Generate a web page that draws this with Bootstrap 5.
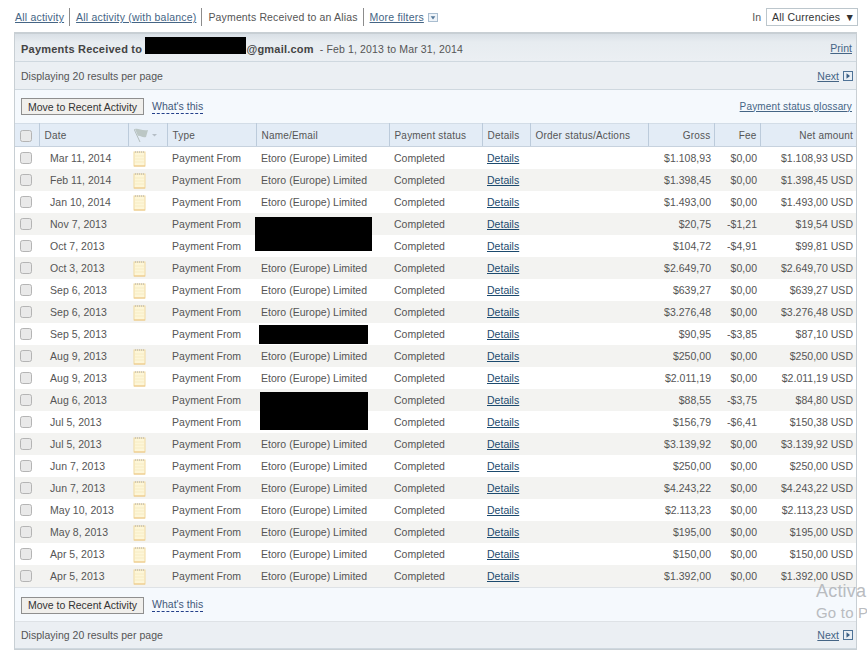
<!DOCTYPE html>
<html lang="en"><head><meta charset="utf-8"><title>Payments Received</title>
<link rel="stylesheet" href="https://cdn.jsdelivr.net/npm/bootstrap@5.3.0/dist/css/bootstrap.min.css">
<style>
html,body{height:653px;overflow:hidden}
body{background:#fff;color:#555;font:10.5px/14px "Liberation Sans",Arial,sans-serif;letter-spacing:.02px;position:relative}
a{color:#456585}
.top-filters{height:32px;padding:2px 9px 0 15px}
.top-filters .sep{border-left:1px solid #8c8c8c;height:18px;margin:0 5px 0 5px}
.top-filters a{letter-spacing:.2px}
.top-filters .sep + a{margin-left:1px}
.top-filters>span.alias-text{letter-spacing:.15px;margin-left:1px}
.filter-arrow{width:10px;height:9px;border:1px solid #a9bdd0;margin-left:4px;background:#eef3f8}
.curr-box{width:92px;height:18px;border:1px solid #bcc6cc;padding:0 2px 0 5px;margin-left:5px;color:#333;font-size:10.500px;letter-spacing:.2px;line-height:16px;white-space:nowrap}
.panel-box{margin:0 10px 0 14px;width:843px;height:618px;border:1px solid #c8cfd4;border-top-width:2px;position:relative}
.bar-title{height:28px;padding:0 4px 0 6px;background:linear-gradient(#d9e0e6,#e7ecf0 30%,#ebeff3);border-bottom:1px solid #cfd8df}
.bar-page{height:28px;padding:0 3px 0 6px;background:#ebeff3;border-bottom:1px solid #cfd8df}
.bar-act{height:33px;padding:0 4px 0 6px;background:#f5f9fd}
.title-strong{font-weight:700;color:#444;font-size:11px;letter-spacing:.22px}
.title-range{letter-spacing:.15px}
.email-gap{display:inline-block;width:101px;height:14px}
.move-btn{font:10.5px/14px "Liberation Sans",Arial,sans-serif;height:17px;padding:0 5px;width:123px;border:1px solid #8f8f8f;border-radius:0;background:#f0efec;color:#333;white-space:nowrap}
.move-btn:hover{background:#f0efec;border-color:#8f8f8f;color:#333}
.whats{color:#42587a;border-bottom:1px dashed #24408a;margin-left:8px;line-height:13px}
.act-glossary{font-size:10px;letter-spacing:.15px}
.pay-table{table-layout:fixed;width:841px;margin:0;border-collapse:collapse;font-size:10.5px;--bs-table-bg:transparent}
.pay-table th,.pay-table td{border:0;padding:0 3px 0 5px;height:22px;line-height:14px;white-space:nowrap;color:#555;font-weight:400;background:transparent;box-shadow:none;overflow:hidden;vertical-align:middle}
.pay-table thead th{height:23px;padding-top:1px;background:#e3ecf6;border-top:1px solid #d3dde7;border-bottom:1px solid #c7d2de;border-right:1px solid #bccbdb;font-size:10px;letter-spacing:.2px}
.pay-table thead th:last-child{border-right:0}
.pay-table tbody tr:nth-child(even) td{background:#f3f3f1}
.pay-table .ta-r{text-align:right}
.pay-table .date-cell{padding-left:11px}
.pay-table a{color:#1c4a6e}
.chk{width:12px;height:12px;margin:0;display:block;border:1px solid #b4b4b4;border-radius:3px;background:#e9e9e9;float:none}
.note-ico{display:block;margin:2px 0 0}
.cover{position:absolute;background:#000}
.win-mark{position:absolute;left:816px;top:580px;color:#b9bcc0;white-space:nowrap;letter-spacing:.2px}
.win-a{font-size:18px;line-height:22px}
.win-b{font-size:15px;line-height:22px}
.bar-spaced{height:34px;padding-top:2px}
.bar-foot{padding-top:1px}
</style></head>
<body>
<svg width="0" height="0" class="position-absolute"><defs>
<symbol id="note" viewBox="0 0 13 16"><rect x="1" y="1" width="11" height="14" fill="#fdf6d8" stroke="#f0d9a0"/><path d="M2 1h9" stroke="#aaa" stroke-dasharray="1 1"/><path d="M2 5h9M2 8h9M2 11h9" stroke="#f7ecc4"/><path d="M1 15h11" stroke="#eec98a"/></symbol>
<symbol id="next" viewBox="0 0 10 10"><rect x=".5" y=".5" width="9" height="9" fill="#e9eff5" stroke="#4f7397"/><path d="M3.500 2.200 7 5 3.500 7.800z" fill="#3a5f85"/></symbol>
</defs></svg>

<nav class="top-filters d-flex align-items-center">
<a href="#">All activity</a><span class="sep"></span>
<a href="#">All activity (with balance)</a><span class="sep"></span>
<span class="alias-text">Payments Received to an Alias</span><span class="sep"></span>
<a href="#">More filters</a>
<svg class="filter-arrow" viewBox="0 0 10 9"><path d="M2 3h6L5 7z" fill="#55789a"/></svg>
<span class="ms-auto">In</span>
<div class="curr-box d-flex justify-content-between"><span>All Currencies</span><span>▼</span></div>
</nav>

<main class="panel-box">
<div class="bar-title d-flex align-items-center justify-content-between">
<div><span class="title-strong">Payments Received to <span class="email-gap"></span>@gmail.com</span>&nbsp; <span class="title-range">- Feb 1, 2013 to Mar 31, 2014</span></div>
<a href="#">Print</a></div>
<div class="bar-page d-flex align-items-center justify-content-between">
<span>Displaying 20 results per page</span>
<span class="d-flex align-items-center"><a href="#">Next</a><svg width="10" height="10" class="ms-1"><use href="#next"/></svg></span></div>
<div class="bar-act d-flex align-items-center justify-content-between">
<div class="d-flex align-items-center"><button class="btn move-btn">Move to Recent Activity</button><span class="whats">What's this</span></div>
<a href="#" class="act-glossary">Payment status glossary</a></div>

<table class="table pay-table">
<colgroup><col style="width:24px"><col style="width:89px"><col style="width:39px"><col style="width:89px"><col style="width:133px"><col style="width:93px"><col style="width:48px"><col style="width:118px"><col style="width:66px"><col style="width:46px"><col style="width:96px"></colgroup>
<thead><tr>
<th><input class="form-check-input chk" type="checkbox" aria-label="All"></th><th>Date</th>
<th><svg width="26" height="15" viewBox="0 0 26 15"><path d="M0 1l6 13" fill="none" stroke="#b3bdbd"/><path d="M1 1C4 0 8 3 14 2l-2 7C8 10 6 7 4 8z" fill="#bcc7c5"/><path d="M18 6h5l-2.500 2.500z" fill="#b5bec6"/></svg></th>
<th>Type</th><th>Name/Email</th><th>Payment status</th><th>Details</th><th>Order status/Actions</th><th class="ta-r">Gross</th><th class="ta-r">Fee</th><th class="ta-r">Net amount</th></tr></thead>
<tbody id="rows"></tbody></table>

<div class="bar-act bar-spaced d-flex align-items-center border-top"><button class="btn move-btn">Move to Recent Activity</button><span class="whats">What's this</span></div>
<div class="bar-page bar-foot d-flex align-items-center justify-content-between border-top">
<span>Displaying 20 results per page</span>
<span class="d-flex align-items-center"><a href="#">Next</a><svg width="10" height="10" class="ms-1"><use href="#next"/></svg></span></div>
</main>

<div class="cover" style="left:145px;top:37px;width:101px;height:17px"></div>
<div class="cover" style="left:255px;top:217px;width:117px;height:34px"></div>
<div class="cover" style="left:259px;top:325px;width:109px;height:19px"></div>
<div class="cover" style="left:260px;top:392px;width:108px;height:38px"></div>
<div class="win-mark"><div class="win-a">Activa</div><div class="win-b">Go to P</div></div>

<script>
const E='Etoro (Europe) Limited';
const d=[['Mar 11, 2014',1,E,'$1.108,93','$0,00','$1.108,93'],['Feb 11, 2014',1,E,'$1.398,45','$0,00','$1.398,45'],['Jan 10, 2014',1,E,'$1.493,00','$0,00','$1.493,00'],['Nov 7, 2013',0,'','$20,75','-$1,21','$19,54'],['Oct 7, 2013',0,'','$104,72','-$4,91','$99,81'],['Oct 3, 2013',1,E,'$2.649,70','$0,00','$2.649,70'],['Sep 6, 2013',1,E,'$639,27','$0,00','$639,27'],['Sep 6, 2013',1,E,'$3.276,48','$0,00','$3.276,48'],['Sep 5, 2013',0,'','$90,95','-$3,85','$87,10'],['Aug 9, 2013',1,E,'$250,00','$0,00','$250,00'],['Aug 9, 2013',1,E,'$2.011,19','$0,00','$2.011,19'],['Aug 6, 2013',0,'','$88,55','-$3,75','$84,80'],['Jul 5, 2013',0,'','$156,79','-$6,41','$150,38'],['Jul 5, 2013',1,E,'$3.139,92','$0,00','$3.139,92'],['Jun 7, 2013',1,E,'$250,00','$0,00','$250,00'],['Jun 7, 2013',1,E,'$4.243,22','$0,00','$4.243,22'],['May 10, 2013',1,E,'$2.113,23','$0,00','$2.113,23'],['May 8, 2013',1,E,'$195,00','$0,00','$195,00'],['Apr 5, 2013',1,E,'$150,00','$0,00','$150,00'],['Apr 5, 2013',1,E,'$1.392,00','$0,00','$1.392,00']];
document.getElementById('rows').innerHTML=d.map(r=>`<tr><td><input class="form-check-input chk" type="checkbox" aria-label="Select"></td><td class="date-cell">${r[0]}</td><td>${r[1]?'<svg class="note-ico" width="13" height="16"><use href="#note"/></svg>':''}</td><td>Payment From</td><td>${r[2]}</td><td>Completed</td><td><a href="#">Details</a></td><td></td><td class="ta-r">${r[3]}</td><td class="ta-r">${r[4]}</td><td class="ta-r">${r[5]} USD</td></tr>`).join('');
</script>
<script src="https://cdn.jsdelivr.net/npm/bootstrap@5.3.0/dist/js/bootstrap.bundle.min.js"></script>
</body></html>
